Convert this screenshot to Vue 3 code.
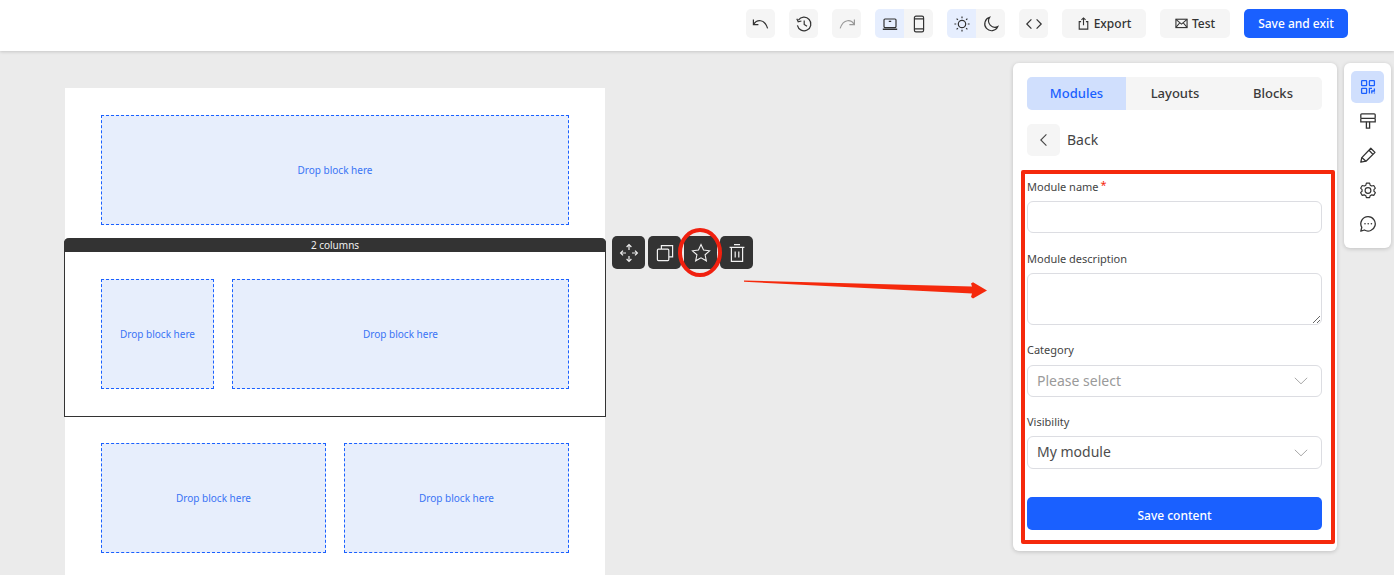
<script setup>
const dropLabel = 'Drop block here'
</script>

<template>
  <div class="page">
    <header class="topbar">
      <button class="icon-btn" aria-label="Undo">
        <svg viewBox="0 0 18 18" class="i18"><path d="M1.4 4.6 V9.6 H6.4" /><path d="M1.6 9.4 C4.6 4.6 12.4 3.2 15.6 13.4" /></svg>
      </button>
      <button class="icon-btn" aria-label="History">
        <svg viewBox="0 0 18 18" class="i18"><path d="M3.4 5.2 A6.8 6.8 0 1 1 2.4 10.4" /><path d="M1.8 3.8 L3.2 6.8 L6.4 6" /><path d="M9.2 5.4 V9.4 L12 11.2" /></svg>
      </button>
      <button class="icon-btn muted" aria-label="Redo">
        <svg viewBox="0 0 18 18" class="i18"><path d="M16.4 4.6 V9.6 H11.4" /><path d="M16.2 9.4 C13.4 4.6 5.6 3.2 2.2 13.4" /></svg>
      </button>
      <div class="seg">
        <button class="seg-btn on" aria-label="Desktop">
          <svg viewBox="0 0 18 18" class="i18"><rect x="3" y="4" width="12" height="8.6" rx="1" /><path d="M1.8 14.2 H16.2" stroke-width="1.6" /><path d="M7.8 6.4 H10.2" /></svg>
        </button>
        <button class="seg-btn" aria-label="Mobile">
          <svg viewBox="0 0 18 18" class="i18"><rect x="4.4" y="1.2" width="9.2" height="15.6" rx="1.6" /><path d="M4.4 3.8 H13.6 M4.4 13.8 H13.6" /></svg>
        </button>
      </div>
      <div class="seg">
        <button class="seg-btn on" aria-label="Light">
          <svg viewBox="0 0 18 18" class="i18"><circle cx="9" cy="9" r="3.7" /><path d="M9 1.4 V3.2 M9 14.8 V16.6 M1.4 9 H3.2 M14.8 9 H16.6 M3.6 3.6 L4.9 4.9 M13.1 13.1 L14.4 14.4 M3.6 14.4 L4.9 13.1 M13.1 4.9 L14.4 3.6" /></svg>
        </button>
        <button class="seg-btn" aria-label="Dark">
          <svg viewBox="0 0 18 18" class="i18"><path d="M7.6 2.4 A6.8 6.8 0 1 0 15.8 11.6 A6.4 6.4 0 0 1 7.6 2.4 Z" /></svg>
        </button>
      </div>
      <button class="icon-btn" aria-label="Code">
        <svg viewBox="0 0 18 18" class="i18"><path d="M6.4 4.4 L1.8 9 L6.4 13.6" /><path d="M11.6 4.4 L16.2 9 L11.6 13.6" /></svg>
      </button>
      <button class="text-btn export">
        <svg viewBox="0 0 14 14" class="i12"><path d="M4.4 5 H2.4 V13 H11.6 V5 H9.6" /><path d="M7 9 V1.2 M4.8 3.2 L7 1 L9.2 3.2" /></svg>
        <span>Export</span>
      </button>
      <button class="text-btn test">
        <svg viewBox="0 0 14 14" class="i12"><rect x="1" y="2.4" width="12" height="9" /><path d="M1 2.6 L7 7.6 L13 2.6 M1 11.2 L5.2 6.2 M13 11.2 L8.8 6.2" /></svg>
        <span>Test</span>
      </button>
      <button class="primary-btn save-exit">Save and exit</button>
    </header>

    <main class="workspace">
      <section class="canvas">
        <div class="row row-first">
          <div class="drop">{{ dropLabel }}</div>
        </div>

        <div class="row-selected">
          <div class="sel-title">2 columns</div>
          <div class="row-body">
            <div class="drop narrow">{{ dropLabel }}</div>
            <div class="drop grow">{{ dropLabel }}</div>
          </div>
          <div class="tools">
            <button class="tool" aria-label="Move">
              <svg viewBox="0 0 22 22" class="i20"><path d="M11 3 V8 M11 14 V19 M3 11 H8 M14 11 H19" /><path d="M8.6 5 L11 2.6 L13.4 5 M8.6 17 L11 19.4 L13.4 17 M5 8.6 L2.6 11 L5 13.4 M17 8.6 L19.4 11 L17 13.4" /></svg>
            </button>
            <button class="tool" aria-label="Copy">
              <svg viewBox="0 0 22 22" class="i20"><rect x="3.4" y="7.2" width="11.4" height="11.4" rx="1" /><path d="M7.4 7 V3.6 H18.6 V14.8 H15" /></svg>
            </button>
            <button class="tool" aria-label="Favourite">
              <svg viewBox="0 0 22 22" class="i22"><path d="M11 1.6 L13.8 7.8 L20.4 8.6 L15.5 13 L16.9 19.6 L11 16.3 L5.1 19.6 L6.5 13 L1.6 8.6 L8.2 7.8 Z" /></svg>
            </button>
            <button class="tool" aria-label="Delete">
              <svg viewBox="0 0 22 22" class="i20"><path d="M3.6 5.4 H18.4 M8 2.6 H14" /><path d="M5.4 5.4 V19.4 H16.6 V5.4" /><path d="M9.2 9.4 V15.4 M12.8 9.4 V15.4" /></svg>
            </button>
          </div>
        </div>

        <div class="row row-last">
          <div class="drop grow">{{ dropLabel }}</div>
          <div class="drop grow">{{ dropLabel }}</div>
        </div>
      </section>

      <aside class="side">
        <section class="panel">
          <div class="tabs">
            <button class="tab on">Modules</button>
            <button class="tab">Layouts</button>
            <button class="tab">Blocks</button>
          </div>
          <div class="back">
            <button class="back-btn" aria-label="Back">
              <svg viewBox="0 0 18 18" class="i18 thin"><path d="M11.4 3.4 L5.8 9 L11.4 14.6" /></svg>
            </button>
            <span>Back</span>
          </div>
          <form class="form" @submit.prevent>
            <label class="lab first">Module name<em>*</em></label>
            <input class="field" type="text" />
            <label class="lab l-desc">Module description</label>
            <textarea class="field area"></textarea>
            <label class="lab l-cat">Category</label>
            <div class="field select placeholder">
              <span>Please select</span>
              <svg viewBox="0 0 14 8" class="chev"><path d="M.8 .8 L7 6.8 L13.2 .8" /></svg>
            </div>
            <label class="lab l-vis">Visibility</label>
            <div class="field select vis">
              <span>My module</span>
              <svg viewBox="0 0 14 8" class="chev"><path d="M.8 .8 L7 6.8 L13.2 .8" /></svg>
            </div>
            <button class="primary-btn save-content">Save content</button>
          </form>
        </section>

        <nav class="rail">
          <button class="rail-btn on" aria-label="Modules">
            <svg viewBox="0 0 18 18" class="i18"><rect x="2.6" y="2.6" width="5" height="5" rx=".6" /><rect x="10.4" y="2.6" width="5" height="5" rx=".6" /><rect x="2.6" y="10.4" width="5" height="5" rx=".6" /><path d="M10.4 15.4 V10.4 H13 M15.4 10.4 V13 H12.8 V15.4 M15.4 14.6 V15.6" /></svg>
          </button>
          <button class="rail-btn" aria-label="Paint">
            <svg viewBox="0 0 18 18" class="i18"><rect x="1.8" y="1.8" width="14.4" height="4.6" rx="1" /><path d="M1.8 6.4 V9.8 H16.2 V6.4" /><path d="M7.4 9.8 V16.2 H10.6 V9.8" /></svg>
          </button>
          <button class="rail-btn" aria-label="Edit">
            <svg viewBox="0 0 18 18" class="i18"><path d="M1.8 16.2 L2.8 11.6 L11.8 2.2 L16 6.4 L7 15.2 Z" stroke-linejoin="round" /><path d="M10 4.2 L14 8.4 M2.8 11.6 L7 15.2" /></svg>
          </button>
          <button class="rail-btn" aria-label="Settings">
            <svg viewBox="-1 -1 20 20" class="i18"><path d="M7.2 1.4 H10.8 L11.4 3.6 L13.2 4.6 L15.4 4 L17.2 7 L15.6 8.6 V10.4 L17.2 12 L15.4 15 L13.2 14.4 L11.4 15.4 L10.8 17.4 H7.2 L6.6 15.4 L4.8 14.4 L2.6 15 L.8 12 L2.4 10.4 V8.6 L.8 7 L2.6 4 L4.8 4.6 L6.6 3.6 Z" stroke-linejoin="round" /><circle cx="9" cy="9.5" r="3.2" /></svg>
          </button>
          <button class="rail-btn" aria-label="Comments">
            <svg viewBox="0 0 18 18" class="i18"><path d="M9.2 1.6 A7.2 7.2 0 1 1 5.4 15 L1.8 16.2 L2.8 12.4 A7.2 7.2 0 0 1 9.2 1.6 Z" stroke-linejoin="round" /><circle class="dot" cx="6" cy="8.8" r=".8" /><circle class="dot" cx="9.2" cy="8.8" r=".8" /><circle class="dot" cx="12.4" cy="8.8" r=".8" /></svg>
          </button>
        </nav>
      </aside>
    </main>

    <!-- annotation marks drawn over the screenshot -->
    <div class="mark-box"></div>
    <svg class="mark-arrow" viewBox="740 275 250 28">
      <path d="M744 280.4 L972 286.6 L971 283.4 L973 282.2 L987 290.6 L973 298.6 L971 297 L972 293.6 L744 281.8 Z" />
    </svg>
    <div class="mark-circle"></div>
  </div>
</template>

<style>
html, body { margin: 0; }
</style>

<style scoped>
.page {
  position: relative;
  width: 1394px;
  height: 575px;
  overflow: hidden;
  background: #ebebeb;
  font-family: "Noto Sans", "Open Sans", sans-serif;
  color: #333;
}
button { font: inherit; color: inherit; border: 0; padding: 0; cursor: pointer; }
svg { fill: none; stroke: currentColor; stroke-width: 1.2; display: block; }
.i18 { width: 18px; height: 18px; }
.i12 { width: 13px; height: 13px; }
.i20 { width: 22px; height: 22px; }
.i22 { width: 20px; height: 20px; }
.thin { stroke-width: 1.1; color: #444; }
.dot { fill: currentColor; stroke: none; }

.topbar {
  height: 51px;
  box-sizing: border-box;
  padding: 9px 46px 0 0;
  background: #fff;
  display: flex;
  justify-content: flex-end;
  align-items: flex-start;
  gap: 14px;
  box-shadow: 0 1px 3px rgba(0,0,0,.16);
  position: relative;
  z-index: 1;
}
.icon-btn, .seg-btn, .text-btn {
  height: 29px;
  background: #f5f5f5;
  display: flex;
  align-items: center;
  justify-content: center;
}
.icon-btn { width: 29px; border-radius: 5px; }
.icon-btn.muted { color: #999; }
.seg { display: flex; border-radius: 5px; overflow: hidden; }
.seg-btn { width: 29px; }
.seg-btn.on { background: #e6eefe; }
.text-btn {
  gap: 4px;
  border-radius: 5px;
  font-size: 12px;
  font-weight: 500;
}
.export { width: 84px; }
.test { width: 70px; }
.primary-btn {
  background: #1a60ff;
  color: #fff;
  border-radius: 5px;
  font-size: 12px;
  font-weight: 500;
  display: block;
}
.save-exit { width: 104px; height: 29px; }

.workspace { display: flex; align-items: flex-start; height: 524px; }
.canvas {
  margin: 37px 0 0 65px;
  width: 540px;
  height: 500px;
  background: #fff;
  flex: none;
}
.row { display: flex; gap: 18px; padding: 0 36px; }
.row-first { padding-top: 27px; padding-bottom: 13px; }
.row-last { padding-top: 26px; }
.drop {
  height: 110px;
  box-sizing: border-box;
  border: 1px dashed #1a60ff;
  background: #e7eefc;
  color: #3a74f5;
  font-size: 10px;
  display: flex;
  align-items: center;
  justify-content: center;
  flex: 1;
}
.narrow { flex: 0 0 113px; }
.grow { flex: 1 1 0; }
.row-selected {
  position: relative;
  width: 542px;
  margin-left: -1px;
  box-sizing: border-box;
  background: #fff;
  border: 1px solid #333;
  border-top: 0;
  border-radius: 5px 5px 0 0;
}
.sel-title {
  height: 14px;
  margin: 0 -1px;
  background: #333;
  color: #f0f0f0;
  border-radius: 5px 5px 0 0;
  font-size: 10px;
  line-height: 15px;
  text-align: center;
}
.row-body { display: flex; gap: 18px; padding: 27px 36px; }
.tools {
  position: absolute;
  left: 547px;
  top: -2px;
  display: flex;
  gap: 3px;
}
.tool {
  width: 33px;
  height: 33px;
  border-radius: 5px;
  background: #333;
  color: #f2f2f2;
  display: flex;
  align-items: center;
  justify-content: center;
}

.side { margin: 12px 3px 0 auto; display: flex; align-items: flex-start; gap: 7px; }
.panel {
  width: 324px;
  height: 488px;
  box-sizing: border-box;
  padding: 14px 15px 0 14px;
  background: #fff;
  border-radius: 6px;
  box-shadow: 0 1px 4px rgba(0,0,0,.18);
}
.tabs {
  display: flex;
  height: 33px;
  border-radius: 5px;
  overflow: hidden;
  background: #f5f5f5;
}
.tab {
  flex: 1 1 0;
  background: transparent;
  font-size: 13px;
  font-weight: 500;
  color: #3a3a3a;
  padding-bottom: 2px;
}
.tab.on { flex: 0 0 99px; background: #d0dffd; color: #1a60ff; }
.back {
  display: flex;
  align-items: center;
  gap: 7px;
  margin-top: 14px;
  font-size: 14px;
  color: #444;
}
.back span { padding-bottom: 2px; }
.back-btn {
  width: 33px;
  height: 32px;
  border-radius: 5px;
  background: #f5f5f5;
  display: flex;
  align-items: center;
  justify-content: center;
}
.form { display: block; }
.lab {
  display: block;
  font-size: 11px;
  line-height: 15px;
  color: #444;
}
.lab em { color: #f5290c; font-style: normal; margin-left: 2px; position: relative; top: -2px; }
.first { margin-top: 23px; margin-bottom: 7px; }
.l-desc { margin-top: 18px; margin-bottom: 7px; }
.l-cat { margin-top: 17px; margin-bottom: 8px; }
.l-vis { margin-top: 17px; margin-bottom: 7px; }
.field {
  display: block;
  width: 100%;
  height: 32px;
  box-sizing: border-box;
  background: #fff;
  border: 1px solid #dcdde2;
  border-radius: 6px;
  outline: none;
  padding: 0;
  margin: 0;
  font: inherit;
}
.area { height: 52px; resize: vertical; }
.select {
  display: flex;
  align-items: center;
  justify-content: space-between;
  padding: 0 13px 0 9px;
  font-size: 14px;
  color: #4d4d4d;
}
.select span { padding-bottom: 1px; }
.vis { height: 33px; }
.vis span { padding-bottom: 3px; }
.placeholder { color: #9a9a9a; }
.chev { width: 14px; height: 8px; color: #a8a8a8; stroke-width: 1; }
.save-content { width: 100%; height: 33px; margin-top: 28px; padding-top: 3px; }

.rail {
  width: 47px;
  height: 185px;
  box-sizing: border-box;
  padding: 8px 7px;
  background: #fff;
  border-radius: 6px;
  box-shadow: 0 1px 4px rgba(0,0,0,.18);
  display: flex;
  flex-direction: column;
  align-items: center;
  gap: 2.5px;
}
.rail-btn {
  width: 33px;
  height: 32px;
  background: transparent;
  border-radius: 5px;
  display: flex;
  align-items: center;
  justify-content: center;
  color: #333;
}
.rail-btn svg { stroke-width: 1.3; }
.rail-btn.on { background: #d0dffd; color: #1a60ff; }

.mark-box {
  position: absolute;
  left: 1021px;
  top: 170px;
  width: 314px;
  height: 374px;
  box-sizing: border-box;
  border: 4px solid #f5290c;
  border-radius: 2px;
  pointer-events: none;
}
.mark-arrow {
  position: absolute;
  left: 740px;
  top: 275px;
  width: 250px;
  height: 28px;
  fill: #f5290c;
  stroke: none;
  pointer-events: none;
}
.mark-circle {
  position: absolute;
  left: 678px;
  top: 228px;
  width: 44px;
  height: 49px;
  box-sizing: border-box;
  border: 4px solid #f0200f;
  border-radius: 50%;
  pointer-events: none;
}
</style>
